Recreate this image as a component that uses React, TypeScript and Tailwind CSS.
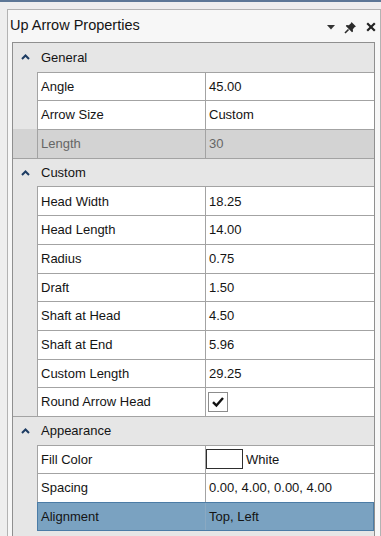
import React from "react";

type Row =
  | { kind: "cat"; label: string }
  | { kind: "prop"; name: string; value: string; tone?: "readonly" | "selected"; extra?: "check" | "swatch" };

const rows: Row[] = [
  { kind: "cat", label: "General" },
  { kind: "prop", name: "Angle", value: "45.00" },
  { kind: "prop", name: "Arrow Size", value: "Custom" },
  { kind: "prop", name: "Length", value: "30", tone: "readonly" },
  { kind: "cat", label: "Custom" },
  { kind: "prop", name: "Head Width", value: "18.25" },
  { kind: "prop", name: "Head Length", value: "14.00" },
  { kind: "prop", name: "Radius", value: "0.75" },
  { kind: "prop", name: "Draft", value: "1.50" },
  { kind: "prop", name: "Shaft at Head", value: "4.50" },
  { kind: "prop", name: "Shaft at End", value: "5.96" },
  { kind: "prop", name: "Custom Length", value: "29.25" },
  { kind: "prop", name: "Round Arrow Head", value: "", extra: "check" },
  { kind: "cat", label: "Appearance" },
  { kind: "prop", name: "Fill Color", value: "White", extra: "swatch" },
  { kind: "prop", name: "Spacing", value: "0.00, 4.00, 0.00, 4.00" },
  { kind: "prop", name: "Alignment", value: "Top, Left", tone: "selected" },
];

const Chevron = () => (
  <svg width="9" height="6" viewBox="0 0 9 6" className="text-[#1d3c63]">
    <path d="M1 5 L4.5 1.5 L8 5" fill="none" stroke="currentColor" strokeWidth="2" />
  </svg>
);

const PinIcon = () => (
  <svg width="13" height="13" viewBox="0 0 13 13">
    <path d="M7.5 1 L12 5.5 L10.8 6 L8.8 8.2 L9 10.5 L8 11.2 L1.8 5 L2.5 4 L4.8 4.2 L7 2.2 Z" fill="#2b2b2b" />
    <path d="M4.5 8.5 L1 12" stroke="#2b2b2b" strokeWidth="1.6" />
  </svg>
);

const CloseIcon = () => (
  <svg width="10" height="10" viewBox="0 0 10 10">
    <path d="M1.2 1.2 L8.8 8.8 M8.8 1.2 L1.2 8.8" stroke="#222" strokeWidth="2.2" />
  </svg>
);

const PropRow = ({ row }: { row: Extract<Row, { kind: "prop" }> }) => {
  const selected = row.tone === "selected";
  const readonly = row.tone === "readonly";
  const cellBg = selected ? "bg-[#7aa2c1]" : readonly ? "bg-[#d3d3d3]" : "bg-white";
  const text = readonly ? "text-[#666666]" : "text-[#141414]";
  return (
    <div className="flex h-[28.7px] shrink-0">
      <div className={`w-[24px] shrink-0 ${readonly ? "bg-[#d3d3d3]" : "bg-[#e6e6e6]"}`} />
      <div
        className={`flex flex-1 border-l border-t ${cellBg} ${
          selected ? "border-[#4b7ca6] border-r border-b" : "border-[#a3a3a3]"
        }`}
      >
        <div
          className={`w-[168px] shrink-0 flex items-center pl-[3px] border-r ${text} ${
            selected ? "border-[#8aa9c2]" : "border-[#a3a3a3]"
          }`}
        >
          {row.name}
        </div>
        <div className={`flex-1 flex items-center pl-[3px] ${text}`}>
          {row.extra === "check" && (
            <div className="w-[20px] h-[20px] border border-[#8c8c8c] bg-white flex items-center justify-center -ml-px">
              <svg width="14" height="12" viewBox="0 0 14 12">
                <path d="M2 6.2 L5.4 9.6 L12 2" fill="none" stroke="#111" strokeWidth="2.4" />
              </svg>
            </div>
          )}
          {row.extra === "swatch" && (
            <div className="w-[37px] h-[20px] border-[1.5px] border-[#2e2e2e] bg-white -ml-[3px] mr-[3px]" />
          )}
          {row.value}
        </div>
      </div>
    </div>
  );
};

const CatRow = ({ label, first }: { label: string; first: boolean }) => (
  <div className={`flex h-[28.7px] shrink-0 bg-[#e6e6e6] ${first ? "" : "border-t border-[#a3a3a3]"}`}>
    <div className="w-[24px] shrink-0 flex items-center justify-center pl-[1px]">
      <Chevron />
    </div>
    <div className="flex items-center pl-[4px] text-[#141414]">{label}</div>
  </div>
);

export default function App() {
  return (
    <div
      className="w-[381px] h-[536px] overflow-hidden bg-[#eeeeee] border-t-2 border-[#5d7796]"
      style={{ fontFamily: '"Liberation Sans", Arial, sans-serif' }}
    >
      <div className="ml-[7px] mt-[7px] w-[374px] h-[540px] border border-[#b3b3b3] bg-[#f7f7f7] flex flex-col">
        {/* title bar */}
        <div className="h-[32px] shrink-0 flex items-center pl-[2px] pr-[4px]">
          <span className="text-[14.5px] text-[#141414] flex-1">Up Arrow Properties</span>
          <div className="flex items-center gap-[9px] pt-[2px]">
            <svg width="8" height="5" viewBox="0 0 8 5">
              <path d="M0 0 L8 0 L4 4.5 Z" fill="#333" />
            </svg>
            <PinIcon />
            <CloseIcon />
          </div>
        </div>

        {/* property grid */}
        <div className="ml-[4px] w-[363px] flex flex-col border border-[#8f8f8f] bg-[#e6e6e6] text-[13px] flex-1">
          {rows.map((r, i) =>
            r.kind === "cat" ? (
              <CatRow key={i} label={r.label} first={i === 0} />
            ) : (
              <PropRow key={i} row={r} />
            )
          )}
        </div>
      </div>
    </div>
  );
}
